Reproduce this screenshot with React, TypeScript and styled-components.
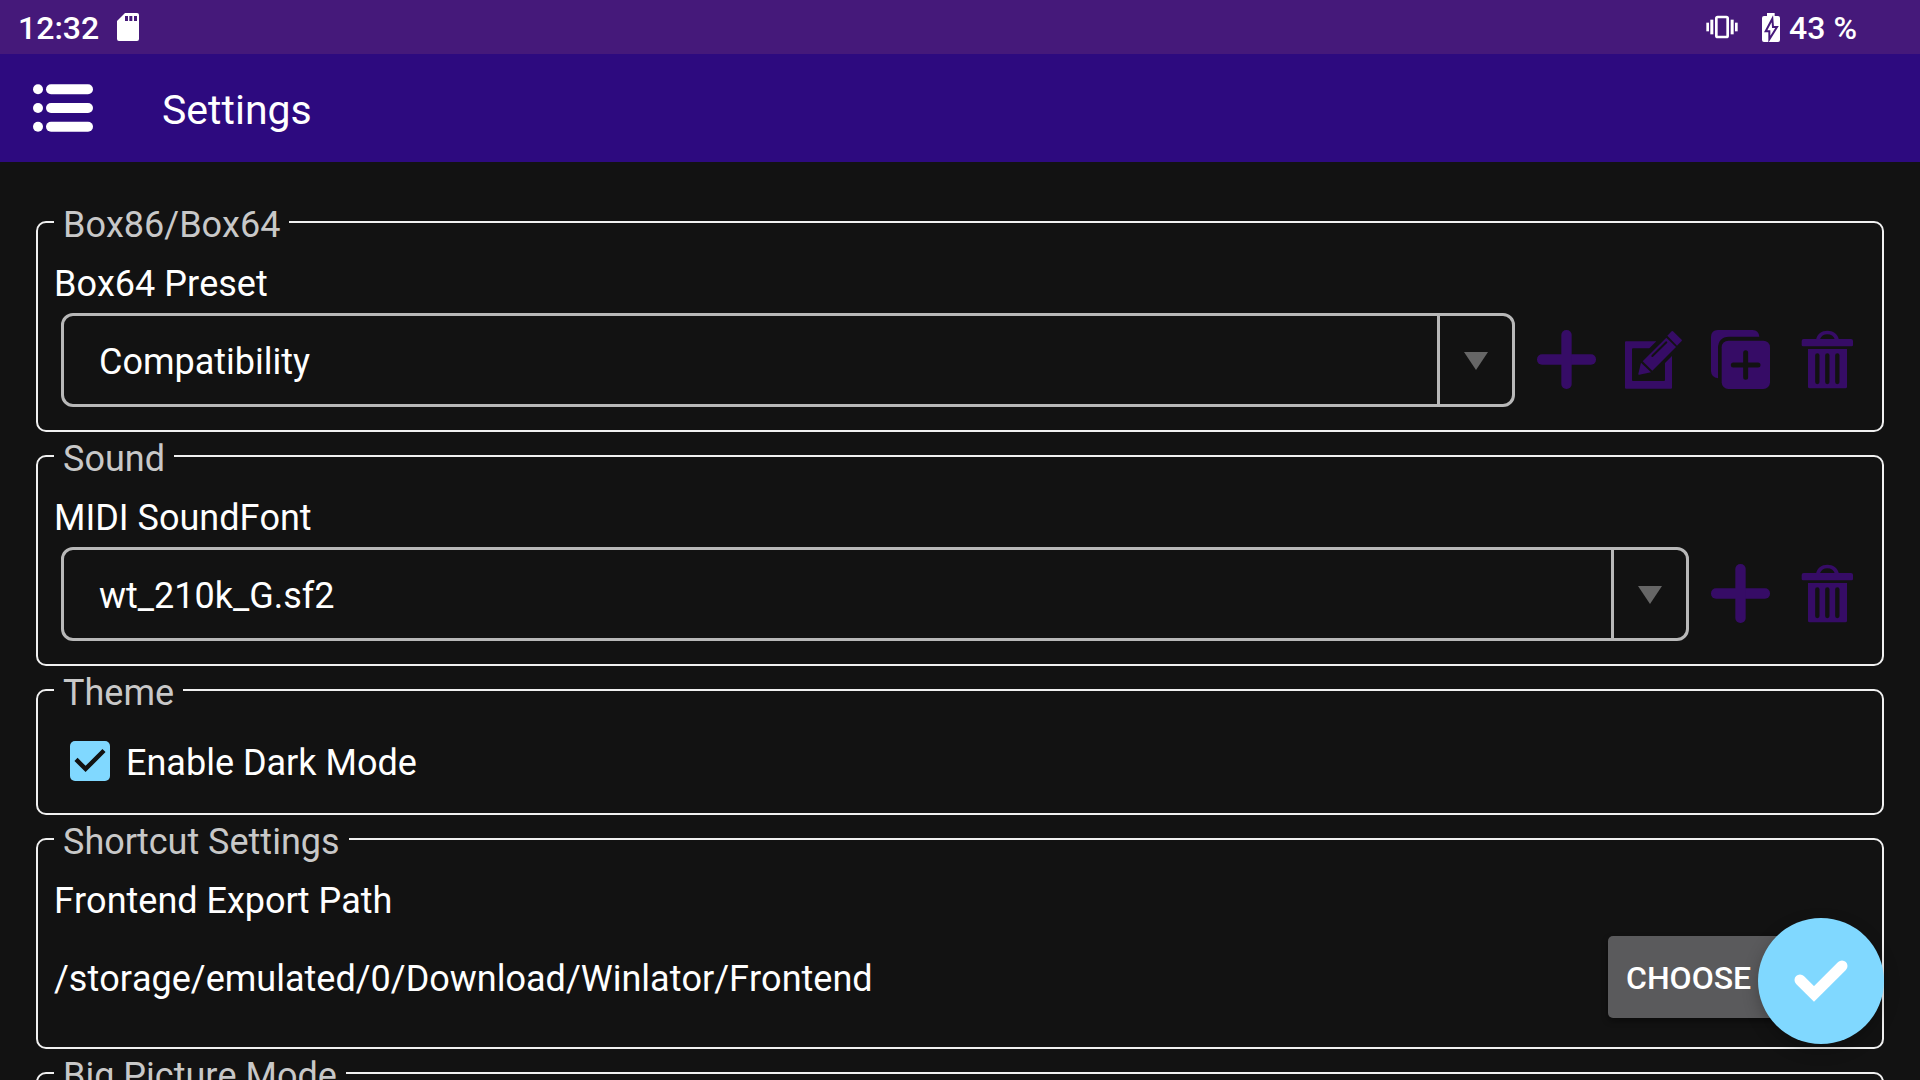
import React, { useState } from "react";
import styled, { createGlobalStyle } from "styled-components";

const color = {
  page: "#121212",
  status: "#45197a",
  bar: "#2d0a7f",
  line: "#f0f0f0",
  legend: "#c8c8c8",
  spinner: "#b8b8b8",
  arrow: "#666666",
  action: "#360c66",
  accent: "#80d8ff",
  button: "#5a5a5c",
};

const GlobalStyle = createGlobalStyle`
  *, *::before, *::after { box-sizing: border-box; }
  body {
    margin: 0;
    background: ${color.page};
    color: #fff;
    font-family: Roboto, "Noto Sans", sans-serif;
    font-size: 36px;
    line-height: 42px;
    font-kerning: none;
  }
  button, select { font: inherit; color: inherit; font-kerning: none; }
`;

const Screen = styled.div`
  display: flex;
  flex-direction: column;
  height: 100vh;
`;

const StatusBar = styled.div`
  display: flex;
  align-items: center;
  justify-content: space-between;
  flex: none;
  height: 54px;
  padding: 0 63px 0 18px;
  background: ${color.status};
  font-size: 32px;
  font-weight: 500;
  line-height: 38px;
`;

const StatusGroup = styled.div<{ $gap: number }>`
  display: flex;
  align-items: center;
  gap: ${(p) => p.$gap}px;
`;

const StatusText = styled.span`
  padding-top: 2px;
`;

const AppBar = styled.header`
  display: flex;
  align-items: center;
  flex: none;
  gap: 56px;
  height: 108px;
  padding: 0 20px;
  background: ${color.bar};
`;

const MenuButton = styled.button`
  display: grid;
  place-items: center;
  width: 86px;
  height: 86px;
  padding: 0;
  border: 0;
  background: none;
`;

const Title = styled.h1`
  margin: 0;
  padding-top: 4px;
  font-size: 41px;
  font-weight: 400;
  line-height: 48px;
`;

const Content = styled.main`
  display: flex;
  flex-direction: column;
  flex: 1;
  min-height: 0;
  padding: 36px 36px 0;
  overflow-y: auto;
  scrollbar-width: none;
`;

const Section = styled.fieldset`
  flex: none;
  min-width: 0;
  margin: 0;
  padding: 17px 11px 23px 16px;
  border: 2px solid ${color.line};
  border-radius: 10px;
`;

const Legend = styled.legend`
  padding: 6px 9px 0;
  color: ${color.legend};
`;

const FieldLabel = styled.label`
  display: block;
  margin-bottom: 8px;
`;

const FieldTitle = styled.div`
  margin-bottom: 8px;
`;

const Row = styled.div`
  display: flex;
  align-items: center;
  height: 94px;
`;

const Spinner = styled.div`
  display: grid;
  grid-template-columns: 1fr 75px;
  flex: 1;
  height: 94px;
  margin: 0 8px 0 7px;
  border: 3px solid ${color.spinner};
  border-radius: 12px;
`;

const SpinnerSelect = styled.select`
  grid-area: 1 / 1 / 2 / 3;
  width: 100%;
  padding: 3px 90px 0 35px;
  border: 0;
  border-radius: 10px;
  background: none;
  appearance: none;
  outline: none;

  option { background: ${color.page}; }
`;

const SpinnerArrow = styled.span`
  display: grid;
  grid-area: 1 / 2 / 2 / 3;
  place-items: center;
  padding-top: 2px;
  border-left: 3px solid ${color.spinner};
  pointer-events: none;
`;

const IconButton = styled.button`
  display: grid;
  place-items: center;
  flex: none;
  width: 87px;
  height: 87px;
  padding: 0 0 2px;
  border: 0;
  background: none;
  color: ${color.action};
`;

const CheckRow = styled.label`
  display: flex;
  align-items: center;
  gap: 16px;
  height: 59px;
  padding-left: 16px;
`;

const CheckMark = styled.span`
  display: grid;
  width: 40px;
  height: 40px;
`;

const CheckInput = styled.input`
  grid-area: 1 / 1;
  width: 40px;
  height: 40px;
  margin: 0;
  border: 4px solid ${color.legend};
  border-radius: 5px;
  appearance: none;

  &:checked { border: 0; background: ${color.accent}; }
  & + svg { display: none; }
  &:checked + svg { display: block; }
`;

const CheckGlyph = styled.svg`
  grid-area: 1 / 1;
  pointer-events: none;
`;

const RowText = styled.span`
  padding-top: 4px;
`;

const PathText = styled(RowText)`
  flex: 1;
  min-width: 0;
`;

const ChooseButton = styled.button`
  flex: none;
  width: 240px;
  height: 82px;
  margin-right: 23px;
  padding: 2px 18px 0;
  border: 0;
  border-radius: 5px;
  background: ${color.button};
  box-shadow: 0 3px 6px rgba(0, 0, 0, 0.4);
  font-size: 32px;
  font-weight: 500;
  text-align: left;
  text-transform: uppercase;
`;

const ConfirmButton = styled.button`
  position: fixed;
  right: 36px;
  bottom: 36px;
  width: 126px;
  height: 126px;
  padding: 0;
  border: 0;
  border-radius: 50%;
  background: ${color.accent};
  box-shadow: 0 6px 16px rgba(0, 0, 0, 0.25);

  svg { display: block; }
`;

const SdCardIcon = () => (
  <svg width="22" height="28" viewBox="0 0 66 84" aria-hidden="true">
    <path
      fill="#fff"
      fillRule="evenodd"
      d="M24 0H60Q66 0 66 6V78Q66 84 60 84H6Q0 84 0 78V24ZM24 9V24H33V9ZM37 9V24H46V9ZM51 9V24H60V9Z"
    />
  </svg>
);

const VibrateIcon = () => (
  <svg width="32" height="24" viewBox="0 0 96 72" aria-hidden="true">
    <g fill="#fff">
      <rect x="1" y="23" width="8" height="26" />
      <rect x="13" y="14" width="9" height="44" />
      <rect x="74" y="14" width="9" height="44" />
      <rect x="87" y="23" width="8" height="26" />
    </g>
    <rect x="31" y="6" width="34" height="60" rx="4" fill="none" stroke="#fff" strokeWidth="8" />
  </svg>
);

const BatteryIcon = () => (
  <svg width="18" height="29" viewBox="0 0 54 87" aria-hidden="true">
    <path
      fill="#fff"
      d="M15 0H38V9H48Q54 9 54 15V81Q54 87 48 87H6Q0 87 0 81V15Q0 9 6 9H15Z"
    />
    <path d="M31 17 11 55H22V79L45 42H33Z" fill="#fff" stroke={color.status} strokeWidth="6" />
  </svg>
);

const MenuIcon = () => (
  <svg width="60" height="48" viewBox="0 0 180 144" fill="#fff" aria-hidden="true">
    {[16, 72, 128].map((y) => (
      <g key={y}>
        <circle cx="15" cy={y} r="15" />
        <rect x="39" y={y - 15} width="141" height="30" rx="15" />
      </g>
    ))}
  </svg>
);

const ActionIcon = ({ children }: { children: React.ReactNode }) => (
  <svg width="59" height="59" viewBox="0 0 177 177" fill="currentColor" aria-hidden="true">
    {children}
  </svg>
);

const AddIcon = () => (
  <ActionIcon>
    <rect x="0" y="73" width="177" height="31" rx="15" />
    <rect x="73" y="0" width="31" height="177" rx="15" />
  </ActionIcon>
);

const EditIcon = () => (
  <ActionIcon>
    <path d="M6 34H97L76 55H27Q24 55 24 58V150Q24 153 27 153H120Q123 153 123 150V99L144 78V173Q144 176 141 176H6Q3 176 3 173V37Q3 34 6 34Z" />
    <path d="M51 98 81 127 46 134Q42 135 43 131Z" />
    <path d="M56 94 127 23 156 51 85 122Z" />
    <path d="M130 17 143 4Q145 2 147 4L173 29Q175 31 173 33L159 47Z" />
    <path d="M85 78 127 37" stroke={color.page} strokeWidth="6" strokeLinecap="round" />
  </ActionIcon>
);

const DuplicateIcon = () => (
  <ActionIcon>
    <path d="M20 0H125Q143 1 145 20H54Q22 21 21 54V145Q1 142 0 124V20Q1 1 20 0Z" />
    <rect x="32" y="32" width="145" height="145" rx="20" />
    <path d="M104 68V142M67 105H141" stroke={color.page} strokeWidth="15" strokeLinecap="round" />
  </ActionIcon>
);

const TrashIcon = () => (
  <ActionIcon>
    <path d="M54 29C58 11 71 2 88 2S119 11 123 29H111C107 18 99 13 88 13S70 18 65 29Z" />
    <path d="M17 27H159Q165 27 165 33V45Q165 49 161 49H15Q11 49 11 45V33Q11 27 17 27Z" />
    <path d="M30 57H147V170Q147 175 142 175H35Q30 175 30 170Z" />
    <path d="M58 76V156M88 76V156M118 76V156" stroke={color.page} strokeWidth="13" strokeLinecap="round" />
  </ActionIcon>
);

type DropDownProps = { id: string; options: string[] };

const DropDown = ({ id, options }: DropDownProps) => (
  <Spinner>
    <SpinnerSelect id={id} defaultValue={options[0]}>
      {options.map((option) => (
        <option key={option}>{option}</option>
      ))}
    </SpinnerSelect>
    <SpinnerArrow>
      <svg width="24" height="18" viewBox="0 0 24 18" aria-hidden="true">
        <path d="M0 0H24L12 18Z" fill={color.arrow} />
      </svg>
    </SpinnerArrow>
  </Spinner>
);

export default function App() {
  const [dark, setDark] = useState(true);

  return (
    <Screen>
      <GlobalStyle />
      <StatusBar>
        <StatusGroup $gap={18}>
          <StatusText>12:32</StatusText>
          <SdCardIcon />
        </StatusGroup>
        <StatusGroup $gap={24}>
          <VibrateIcon />
          <StatusGroup $gap={9}>
            <BatteryIcon />
            <StatusText>43 %</StatusText>
          </StatusGroup>
        </StatusGroup>
      </StatusBar>

      <AppBar>
        <MenuButton type="button" aria-label="Menu">
          <MenuIcon />
        </MenuButton>
        <Title>Settings</Title>
      </AppBar>

      <Content>
        <Section>
          <Legend>Box86/Box64</Legend>
          <FieldLabel htmlFor="preset">Box64 Preset</FieldLabel>
          <Row>
            <DropDown id="preset" options={["Compatibility"]} />
            <IconButton type="button" aria-label="Add preset"><AddIcon /></IconButton>
            <IconButton type="button" aria-label="Edit preset"><EditIcon /></IconButton>
            <IconButton type="button" aria-label="Duplicate preset"><DuplicateIcon /></IconButton>
            <IconButton type="button" aria-label="Remove preset"><TrashIcon /></IconButton>
          </Row>
        </Section>

        <Section>
          <Legend>Sound</Legend>
          <FieldLabel htmlFor="soundfont">MIDI SoundFont</FieldLabel>
          <Row>
            <DropDown id="soundfont" options={["wt_210k_G.sf2"]} />
            <IconButton type="button" aria-label="Add SoundFont"><AddIcon /></IconButton>
            <IconButton type="button" aria-label="Remove SoundFont"><TrashIcon /></IconButton>
          </Row>
        </Section>

        <Section>
          <Legend>Theme</Legend>
          <CheckRow>
            <CheckMark>
              <CheckInput type="checkbox" checked={dark} onChange={(e) => setDark(e.target.checked)} />
              <CheckGlyph width="40" height="40" viewBox="3 3 18 18" aria-hidden="true">
                <path d="M10 17 5 12l1.41-1.41L10 14.17l7.59-7.59L19 8Z" fill={color.page} />
              </CheckGlyph>
            </CheckMark>
            <RowText>Enable Dark Mode</RowText>
          </CheckRow>
        </Section>

        <Section>
          <Legend>Shortcut Settings</Legend>
          <FieldTitle>Frontend Export Path</FieldTitle>
          <Row>
            <PathText>/storage/emulated/0/Download/Winlator/Frontend</PathText>
            <ChooseButton type="button">Choose</ChooseButton>
          </Row>
        </Section>

        <Section>
          <Legend>Big Picture Mode</Legend>
        </Section>
      </Content>

      <ConfirmButton type="button" aria-label="Save settings">
        <svg width="126" height="126" viewBox="0 0 126 126" aria-hidden="true">
          <g fill="none" stroke="#fff" strokeWidth="11">
            <path d="M42 62 56 76 84 48" strokeLinecap="round" strokeLinejoin="miter" />
          </g>
        </svg>
      </ConfirmButton>
    </Screen>
  );
}
